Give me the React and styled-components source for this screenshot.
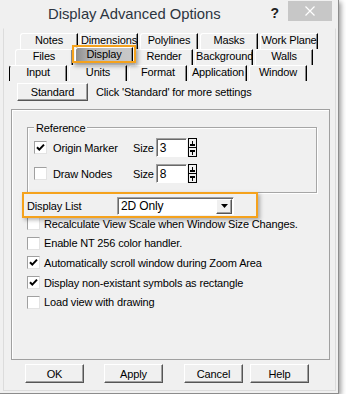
import styled, { createGlobalStyle } from "styled-components"

const GlobalStyle = createGlobalStyle`
  html, body { margin:0; padding:0; background:#fff; }
  body {
    font-family:"Liberation Sans", Arial, sans-serif;
    font-size:11px;
    letter-spacing:-0.15px;
    color:#000;
  }
  * { box-sizing:border-box; }
`

const Window = styled.div`
  width:339px;
  height:394px;
  background:#f0f0f0;
  border-right:1px solid #8c8c8c;
  border-bottom:1px solid #8c8c8c;
  box-shadow:2px 2px 5px rgba(0,0,0,.4);
  display:flex;
  flex-direction:column;
`
const TitleBar = styled.div`
  height:28px;
  flex-shrink:0;
  display:flex;
  align-items:center;
`
const Title = styled.div`
  flex:1;
  margin-left:48px;
  font-size:14.8px;
  letter-spacing:0;
  color:#2c3440;
`
const HelpMark = styled.span`
  align-self:flex-start;
  margin:5px 9px 0 0;
  font-size:14px;
  font-weight:bold;
  letter-spacing:0;
  color:#222;
`
const CloseBtn = styled.div`
  align-self:flex-start;
  margin:1px 6px 0 0;
  width:44px;
  height:20px;
  background:#c7c7c7;
  display:flex;
  align-items:center;
  justify-content:center;
`
const Client = styled.div`
  margin:0 2px 2px 3px;
  height:363px;
  border:1px solid #dcdcdc;
  border-top-color:transparent;
  padding-top:4px;
  display:flex;
  flex-direction:column;
`
const TabRow = styled.div`
  display:flex;
  align-items:flex-start;
  gap:2px;
  height:16px;
  margin-left:${p => p.$indent}px;
`
const Tab = styled.div`
  position:relative;
  z-index:${p => p.$active ? 2 : 0};
  width:58px;
  height:${p => p.$active ? 15 : 16}px;
  margin-top:${p => p.$active ? -2 : 0}px;
  border-top:1px solid #fff;
  border-left:1px solid ${p => p.$lead ? "#000" : "#fff"};
  border-right:1px solid #000;
  border-radius:3px 0 0 0;
  box-shadow:inset -1px 0 #8a8a8a;
  background:${p => p.$active
    ? "linear-gradient(90deg,#8e8e8e 0%,#b3b3b3 25%,#c2c2c2 60%,#c8c8c8 100%)"
    : "#f0f0f0"};
  line-height:12px;
  text-align:center;
  white-space:nowrap;
  overflow:${p => p.$active ? "visible" : "hidden"};

  &::after{
    content:"";
    display:${p => p.$active ? "block" : "none"};
    position:absolute;
    top:-3px;
    bottom:-1px;
    left:-4px;
    right:-4px;
    border:2px solid #f5a21c;
    box-shadow:2px 3px 4px rgba(0,0,0,.35);
  }
`
const StandardRow = styled.div`
  display:flex;
  align-items:center;
  margin:2px 0 0 13px;
  height:18px;
`
const Hint = styled.span`
  margin-left:8px;
`
const Button = styled.div`
  width:${p => p.$w}px;
  height:${p => p.$h}px;
  margin-left:${p => p.$ml || 0}px;
  border:1px solid;
  border-color:#fff #555 #555 #fff;
  box-shadow:inset -1px -1px #a0a0a0;
  background:#f0f0f0;
  display:flex;
  align-items:center;
  justify-content:center;
`
const Panel = styled.div`
  margin:8px 0 0 7px;
  width:319px;
  height:251px;
  flex-shrink:0;
  border:1px solid #a0a0a0;
  box-shadow:inset 1px 1px #fff;
  display:flex;
  flex-direction:column;
`
const GroupBox = styled.div`
  position:relative;
  margin:17px 12px 0 15px;
  border:1px solid #a6a6a6;
  box-shadow:inset 1px 1px #fff, 1px 1px #fff;
  padding:10px 0 9px 6px;
  display:flex;
  flex-direction:column;
  gap:7px;
`
const GroupLabel = styled.span`
  position:absolute;
  top:-6px;
  left:6px;
  padding:0 2px;
  line-height:13px;
  background:#f0f0f0;
`
const GroupRow = styled.div`
  display:flex;
  align-items:center;
  height:19px;
`
const Box = styled.div`
  width:13px;
  height:13px;
  flex-shrink:0;
  background:#fff;
  border:1px solid;
  border-color:#a0a0a0 #e3e3e3 #e3e3e3 #a0a0a0;
  display:flex;
  align-items:center;
  justify-content:center;
`
const RowLabel = styled.span`
  width:${p => p.$w}px;
  margin-left:${p => p.$ml ?? 6}px;
`
const Field = styled.div`
  margin-left:2px;
  width:31px;
  height:19px;
  background:#fff;
  border:1px solid;
  border-color:#a0a0a0 #fff #fff #a0a0a0;
  box-shadow:inset 1px 1px #696969;
  padding:2px 0 0 3px;
  font-size:12px;
`
const Spinner = styled.div`
  margin-left:1px;
  width:9px;
  display:flex;
  flex-direction:column;
`
const SpinHalf = styled.div`
  height:10px;
  margin-top:${p => p.$down ? -1 : 0}px;
  border:1px solid #000;
  background:#f0f0f0;
  display:flex;
  align-items:center;
  justify-content:center;
`
const DisplayRow = styled.div`
  position:relative;
  z-index:1;
  margin:-1px 0 0 10px;
  width:236px;
  height:26px;
  border:2px solid #f5a21c;
  box-shadow:2px 2px 4px rgba(0,0,0,.3);
  padding:1px 0 0 3px;
  display:flex;
  align-items:center;
`
const Select = styled.div`
  width:117px;
  height:18px;
  background:#fff;
  border:1px solid;
  border-color:#a0a0a0 #fff #fff #a0a0a0;
  box-shadow:inset 1px 1px #696969;
  display:flex;
  align-items:center;
  padding:1px 1px 0 3px;
  font-size:12px;
`
const SelectValue = styled.span`
  flex:1;
`
const DropBtn = styled.div`
  width:16px;
  height:15px;
  border:1px solid;
  border-color:#fff #555 #555 #fff;
  box-shadow:inset -1px -1px #a0a0a0;
  background:#f0f0f0;
  display:flex;
  align-items:center;
  justify-content:center;
`
const CheckList = styled.div`
  margin:-4px 0 0 15px;
  display:flex;
  flex-direction:column;
`
const CheckRow = styled.div`
  height:19.6px;
  display:flex;
  align-items:center;
  gap:4px;
`
const ButtonRow = styled.div`
  display:flex;
  margin:4px 0 0 21px;
`

const Check = ({ on }) => (
  <Box>
    {on && (
      <svg width="9" height="9" viewBox="0 0 9 9">
        <path d="M1 4.2l2.3 2.4L8 1.6" fill="none" stroke="#000" strokeWidth="2" />
      </svg>
    )}
  </Box>
)

const Spin = () => (
  <Spinner>
    <SpinHalf>
      <svg width="5" height="5" viewBox="0 0 5 5"><path d="M2 0h1v3h2v2H0V3h2z" /></svg>
    </SpinHalf>
    <SpinHalf $down>
      <svg width="5" height="5" viewBox="0 0 5 5"><path d="M0 0h5v2H3v3H2V2H0z" /></svg>
    </SpinHalf>
  </Spinner>
)

const rows = [
  { indent: 16, tabs: ["Notes", "Dimensions", "Polylines", "Masks", "Work Plane"] },
  { indent: 11, tabs: ["Files", "Display", "Render", "Background", "Walls"] },
  { indent: 5, tabs: ["Input", "Units", "Format", "Application", "Window"] },
]

const options = [
  { label: "Recalculate View Scale when Window Size Changes.", on: false },
  { label: "Enable NT 256 color handler.", on: false },
  { label: "Automatically scroll window during Zoom Area", on: true },
  { label: "Display non-existant symbols as rectangle", on: true },
  { label: "Load view with drawing", on: false },
]

const App = () => {
  return (
    <Window>
      <GlobalStyle />
      <TitleBar>
        <Title>Display Advanced Options</Title>
        <HelpMark>?</HelpMark>
        <CloseBtn>
          <svg width="10" height="10" viewBox="0 0 10 10">
            <path d="M0.5 0.5l9 9M9.5 0.5l-9 9" stroke="#fff" strokeWidth="1.2" />
          </svg>
        </CloseBtn>
      </TitleBar>
      <Client>
        {rows.map((row, r) => (
          <TabRow key={r} $indent={row.indent}>
            {row.tabs.map((t, i) => (
              <Tab key={t} $active={t === "Display"} $lead={r === 2 && i === 0}>{t}</Tab>
            ))}
          </TabRow>
        ))}
        <StandardRow>
          <Button $w={71} $h={18}>Standard</Button>
          <Hint>Click 'Standard' for more settings</Hint>
        </StandardRow>
        <Panel>
          <GroupBox>
            <GroupLabel>Reference</GroupLabel>
            <GroupRow>
              <Check on />
              <RowLabel $w={80}>Origin Marker</RowLabel>
              <span>Size</span>
              <Field>3</Field>
              <Spin />
            </GroupRow>
            <GroupRow>
              <Check />
              <RowLabel $w={80}>Draw Nodes</RowLabel>
              <span>Size</span>
              <Field>8</Field>
              <Spin />
            </GroupRow>
          </GroupBox>
          <DisplayRow>
            <RowLabel $w={90} $ml={0}>Display List</RowLabel>
            <Select>
              <SelectValue>2D Only</SelectValue>
              <DropBtn>
                <svg width="7" height="4" viewBox="0 0 7 4"><path d="M0 0h7L3.5 4z" /></svg>
              </DropBtn>
            </Select>
          </DisplayRow>
          <CheckList>
            {options.map(o => (
              <CheckRow key={o.label}>
                <Check on={o.on} />
                <span>{o.label}</span>
              </CheckRow>
            ))}
          </CheckList>
        </Panel>
        <ButtonRow>
          <Button $w={59} $h={19}>OK</Button>
          <Button $w={59} $h={19} $ml={20}>Apply</Button>
          <Button $w={59} $h={19} $ml={21}>Cancel</Button>
          <Button $w={59} $h={19} $ml={7}>Help</Button>
        </ButtonRow>
      </Client>
    </Window>
  )
}

export default App
